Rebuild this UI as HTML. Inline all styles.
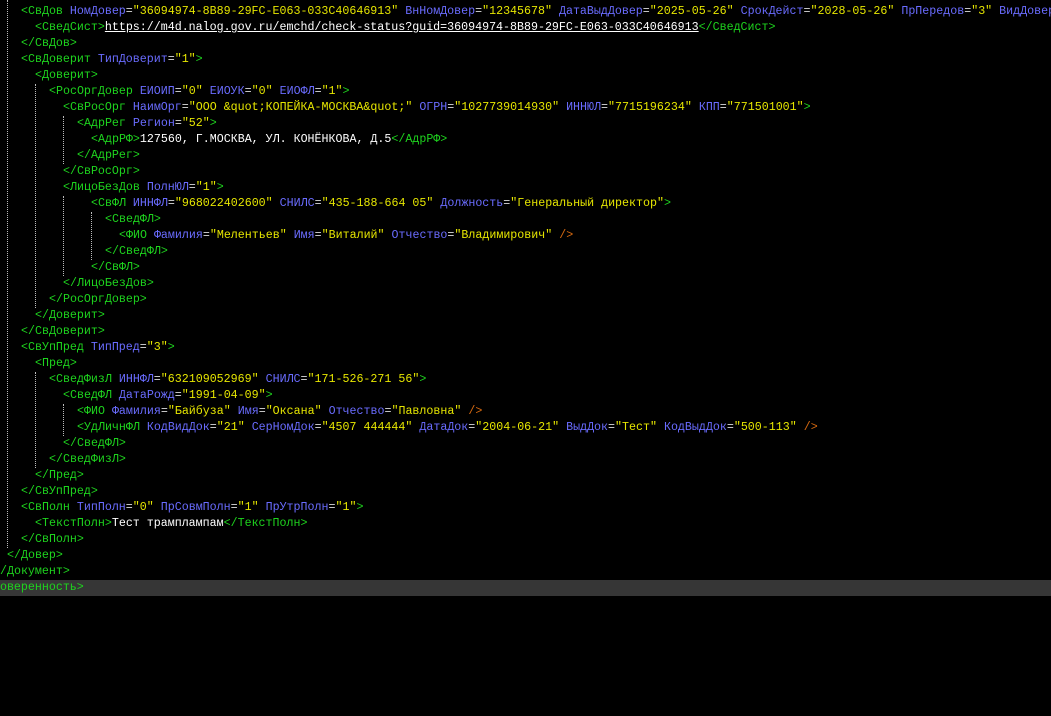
<!DOCTYPE html>
<html><head><meta charset="utf-8">
<style>
html,body{margin:0;padding:0;background:#000;width:1051px;height:716px;overflow:hidden}
#c{position:relative;width:1051px;height:716px;overflow:hidden;font-family:"Liberation Mono","DejaVu Sans Mono",monospace;font-size:11.65px}
.l{position:absolute;height:16px;line-height:16px;white-space:pre;color:#fff}
.t{color:#1ed41e}
.a{color:#6a6cff}
.v{color:#e6e600}
.e{color:#ddd}
.s{color:#d86a10}
.x{color:#fff}
.u{color:#fff;text-decoration:underline}
.g{position:absolute;width:0;border-left:1px dotted #bbb}
.hl{position:absolute;left:0;top:580px;width:1051px;height:16px;background:#363636}
</style></head><body><div id="c">
<div class="hl"></div>
<div class="g" style="left:7px;top:0px;height:548px"></div>
<div class="g" style="left:35px;top:84px;height:224px"></div>
<div class="g" style="left:35px;top:372px;height:96px"></div>
<div class="g" style="left:63px;top:116px;height:48px"></div>
<div class="g" style="left:63px;top:196px;height:80px"></div>
<div class="g" style="left:63px;top:404px;height:32px"></div>
<div class="g" style="left:91px;top:212px;height:48px"></div>

<div class="l" style="top:4px;left:21px"><span class="t">&lt;СвДов </span><span class="a">НомДовер</span><span class="e">=</span><span class="v">"36094974-8B89-29FC-E063-033C40646913"</span> <span class="a">ВнНомДовер</span><span class="e">=</span><span class="v">"12345678"</span> <span class="a">ДатаВыдДовер</span><span class="e">=</span><span class="v">"2025-05-26"</span> <span class="a">СрокДейст</span><span class="e">=</span><span class="v">"2028-05-26"</span> <span class="a">ПрПередов</span><span class="e">=</span><span class="v">"3"</span> <span class="a">ВидДовер</span></div>
<div class="l" style="top:20px;left:35px"><span class="t">&lt;СведСист&gt;</span><span class="u">https://m4d.nalog.gov.ru/emchd/check-status?guid=36094974-8B89-29FC-E063-033C40646913</span><span class="t">&lt;/СведСист&gt;</span></div>
<div class="l" style="top:36px;left:21px"><span class="t">&lt;/СвДов&gt;</span></div>
<div class="l" style="top:52px;left:21px"><span class="t">&lt;СвДоверит </span><span class="a">ТипДоверит</span><span class="e">=</span><span class="v">"1"</span><span class="t">&gt;</span></div>
<div class="l" style="top:68px;left:35px"><span class="t">&lt;Доверит&gt;</span></div>
<div class="l" style="top:84px;left:49px"><span class="t">&lt;РосОргДовер </span><span class="a">ЕИОИП</span><span class="e">=</span><span class="v">"0"</span> <span class="a">ЕИОУК</span><span class="e">=</span><span class="v">"0"</span> <span class="a">ЕИОФЛ</span><span class="e">=</span><span class="v">"1"</span><span class="t">&gt;</span></div>
<div class="l" style="top:100px;left:63px"><span class="t">&lt;СвРосОрг </span><span class="a">НаимОрг</span><span class="e">=</span><span class="v">"ООО &amp;quot;КОПЕЙКА-МОСКВА&amp;quot;"</span> <span class="a">ОГРН</span><span class="e">=</span><span class="v">"1027739014930"</span> <span class="a">ИННЮЛ</span><span class="e">=</span><span class="v">"7715196234"</span> <span class="a">КПП</span><span class="e">=</span><span class="v">"771501001"</span><span class="t">&gt;</span></div>
<div class="l" style="top:116px;left:77px"><span class="t">&lt;АдрРег </span><span class="a">Регион</span><span class="e">=</span><span class="v">"52"</span><span class="t">&gt;</span></div>
<div class="l" style="top:132px;left:91px"><span class="t">&lt;АдрРФ&gt;</span><span class="x">127560, Г.МОСКВА, УЛ. КОНЁНКОВА, Д.5</span><span class="t">&lt;/АдрРФ&gt;</span></div>
<div class="l" style="top:148px;left:77px"><span class="t">&lt;/АдрРег&gt;</span></div>
<div class="l" style="top:164px;left:63px"><span class="t">&lt;/СвРосОрг&gt;</span></div>
<div class="l" style="top:180px;left:63px"><span class="t">&lt;ЛицоБезДов </span><span class="a">ПолнЮЛ</span><span class="e">=</span><span class="v">"1"</span><span class="t">&gt;</span></div>
<div class="l" style="top:196px;left:91px"><span class="t">&lt;СвФЛ </span><span class="a">ИННФЛ</span><span class="e">=</span><span class="v">"968022402600"</span> <span class="a">СНИЛС</span><span class="e">=</span><span class="v">"435-188-664 05"</span> <span class="a">Должность</span><span class="e">=</span><span class="v">"Генеральный директор"</span><span class="t">&gt;</span></div>
<div class="l" style="top:212px;left:105px"><span class="t">&lt;СведФЛ&gt;</span></div>
<div class="l" style="top:228px;left:119px"><span class="t">&lt;ФИО </span><span class="a">Фамилия</span><span class="e">=</span><span class="v">"Мелентьев"</span> <span class="a">Имя</span><span class="e">=</span><span class="v">"Виталий"</span> <span class="a">Отчество</span><span class="e">=</span><span class="v">"Владимирович"</span> <span class="s">/&gt;</span></div>
<div class="l" style="top:244px;left:105px"><span class="t">&lt;/СведФЛ&gt;</span></div>
<div class="l" style="top:260px;left:91px"><span class="t">&lt;/СвФЛ&gt;</span></div>
<div class="l" style="top:276px;left:63px"><span class="t">&lt;/ЛицоБезДов&gt;</span></div>
<div class="l" style="top:292px;left:49px"><span class="t">&lt;/РосОргДовер&gt;</span></div>
<div class="l" style="top:308px;left:35px"><span class="t">&lt;/Доверит&gt;</span></div>
<div class="l" style="top:324px;left:21px"><span class="t">&lt;/СвДоверит&gt;</span></div>
<div class="l" style="top:340px;left:21px"><span class="t">&lt;СвУпПред </span><span class="a">ТипПред</span><span class="e">=</span><span class="v">"3"</span><span class="t">&gt;</span></div>
<div class="l" style="top:356px;left:35px"><span class="t">&lt;Пред&gt;</span></div>
<div class="l" style="top:372px;left:49px"><span class="t">&lt;СведФизЛ </span><span class="a">ИННФЛ</span><span class="e">=</span><span class="v">"632109052969"</span> <span class="a">СНИЛС</span><span class="e">=</span><span class="v">"171-526-271 56"</span><span class="t">&gt;</span></div>
<div class="l" style="top:388px;left:63px"><span class="t">&lt;СведФЛ </span><span class="a">ДатаРожд</span><span class="e">=</span><span class="v">"1991-04-09"</span><span class="t">&gt;</span></div>
<div class="l" style="top:404px;left:77px"><span class="t">&lt;ФИО </span><span class="a">Фамилия</span><span class="e">=</span><span class="v">"Байбуза"</span> <span class="a">Имя</span><span class="e">=</span><span class="v">"Оксана"</span> <span class="a">Отчество</span><span class="e">=</span><span class="v">"Павловна"</span> <span class="s">/&gt;</span></div>
<div class="l" style="top:420px;left:77px"><span class="t">&lt;УдЛичнФЛ </span><span class="a">КодВидДок</span><span class="e">=</span><span class="v">"21"</span> <span class="a">СерНомДок</span><span class="e">=</span><span class="v">"4507 444444"</span> <span class="a">ДатаДок</span><span class="e">=</span><span class="v">"2004-06-21"</span> <span class="a">ВыдДок</span><span class="e">=</span><span class="v">"Тест"</span> <span class="a">КодВыдДок</span><span class="e">=</span><span class="v">"500-113"</span> <span class="s">/&gt;</span></div>
<div class="l" style="top:436px;left:63px"><span class="t">&lt;/СведФЛ&gt;</span></div>
<div class="l" style="top:452px;left:49px"><span class="t">&lt;/СведФизЛ&gt;</span></div>
<div class="l" style="top:468px;left:35px"><span class="t">&lt;/Пред&gt;</span></div>
<div class="l" style="top:484px;left:21px"><span class="t">&lt;/СвУпПред&gt;</span></div>
<div class="l" style="top:500px;left:21px"><span class="t">&lt;СвПолн </span><span class="a">ТипПолн</span><span class="e">=</span><span class="v">"0"</span> <span class="a">ПрСовмПолн</span><span class="e">=</span><span class="v">"1"</span> <span class="a">ПрУтрПолн</span><span class="e">=</span><span class="v">"1"</span><span class="t">&gt;</span></div>
<div class="l" style="top:516px;left:35px"><span class="t">&lt;ТекстПолн&gt;</span><span class="x">Тест трамплампам</span><span class="t">&lt;/ТекстПолн&gt;</span></div>
<div class="l" style="top:532px;left:21px"><span class="t">&lt;/СвПолн&gt;</span></div>
<div class="l" style="top:548px;left:7px"><span class="t">&lt;/Довер&gt;</span></div>
<div class="l" style="top:564px;left:-7px"><span class="t">&lt;/Документ&gt;</span></div>
<div class="l" style="top:580px;left:-21px"><span class="t">&lt;/Доверенность&gt;</span></div>
</div></body></html>
